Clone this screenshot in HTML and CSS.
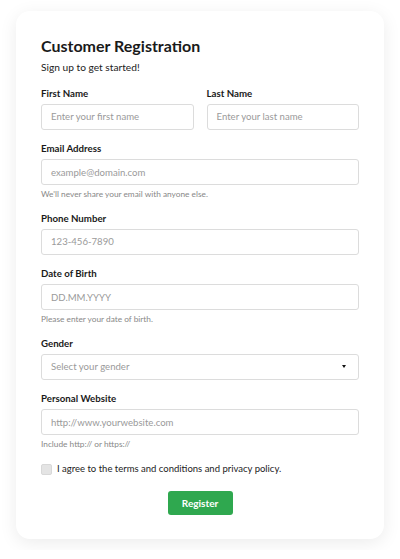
FILE: index.html
```html
<!DOCTYPE html>
<html lang="en">
<head>
<meta charset="utf-8">
<title>Customer Registration</title>
<link rel="stylesheet" href="styles.css">
</head>
<body>
<div class="card">
  <h1 class="title">Customer Registration</h1>
  <p class="subtitle">Sign up to get started!</p>
  <form class="form">
    <div class="row">
      <div class="group">
        <label class="label">First Name</label>
        <div class="input"><span class="ph">Enter your first name</span></div>
      </div>
      <div class="group">
        <label class="label">Last Name</label>
        <div class="input"><span class="ph">Enter your last name</span></div>
      </div>
    </div>
    <div class="group">
      <label class="label">Email Address</label>
      <div class="input"><span class="ph">example@domain.com</span></div>
      <div class="help">We'll never share your email with anyone else.</div>
    </div>
    <div class="group">
      <label class="label">Phone Number</label>
      <div class="input"><span class="ph">123-456-7890</span></div>
    </div>
    <div class="group">
      <label class="label">Date of Birth</label>
      <div class="input"><span class="ph">DD.MM.YYYY</span></div>
      <div class="help">Please enter your date of birth.</div>
    </div>
    <div class="group">
      <label class="label">Gender</label>
      <div class="input select"><span class="ph">Select your gender</span><span class="caret"></span></div>
    </div>
    <div class="group">
      <label class="label">Personal Website</label>
      <div class="input"><span class="ph">http://www.yourwebsite.com</span></div>
      <div class="help">Include http:// or https://</div>
    </div>
    <div class="check-row">
      <span class="checkbox"></span>
      <span class="check-text">I agree to the terms and conditions and privacy policy.</span>
    </div>
    <div class="actions">
      <button type="button" class="btn">Register</button>
    </div>
  </form>
</div>
</body>
</html>
```
FILE: styles.css
```css
* { box-sizing: border-box; }
html, body { background: #ffffff; }
body {
  margin: 0;
  padding: 11px 16px;
  font-family: Lato, "Noto Sans", sans-serif;
  color: #222;
}
.card {
  width: 368px;
  background: #fff;
  border-radius: 14px;
  box-shadow: 0 4px 18px rgba(0, 0, 0, 0.08);
  padding: 25px 25px 24px;
}
.title {
  margin: 0;
  font-size: 16px;
  line-height: 20px;
  font-weight: 700;
  color: #1a1a1a;
}
.subtitle {
  margin: 4px 0 0;
  font-size: 10.2px;
  line-height: 14px;
  color: #222;
}
.form {
  margin-top: 11.5px;
  display: flex;
  flex-direction: column;
  gap: 11.5px;
}
.row {
  display: flex;
  gap: 13px;
}
.row .group { flex: 1; }
.group { display: flex; flex-direction: column; }
.label {
  display: block;
  font-size: 9.7px;
  line-height: 14px;
  font-weight: 700;
  color: #1a1a1a;
  margin-bottom: 4px;
}
.input {
  height: 26px;
  border: 1px solid #dcdcdc;
  border-radius: 3px;
  background: #fff;
  display: flex;
  align-items: center;
  padding: 0 9px;
}
.ph {
  font-size: 9.6px;
  color: #9a9a9a;
}
.select { justify-content: space-between; padding-right: 12px; }
.caret {
  width: 0;
  height: 0;
  border-left: 2.5px solid transparent;
  border-right: 2.5px solid transparent;
  border-top: 3px solid #111;
}
.help {
  margin-top: 4px;
  font-size: 8.3px;
  line-height: 10px;
  color: #888;
}
.check-row {
  margin-top: 1.5px;
  display: flex;
  align-items: center;
  gap: 5px;
  height: 14px;
}
.checkbox {
  width: 11px;
  height: 11px;
  border-radius: 2px;
  background: #e4e4e4;
  border: 1px solid #d8d8d8;
}
.check-text {
  font-size: 9.5px;
  line-height: 14px;
  color: #222;
}
.actions {
  margin-top: 3px;
  display: flex;
  justify-content: center;
}
.btn {
  width: 65px;
  height: 24px;
  border: none;
  border-radius: 3px;
  background: #2fa84f;
  color: #fff;
  font-family: inherit;
  font-size: 10px;
  font-weight: 700;
  padding: 0;
}
```
